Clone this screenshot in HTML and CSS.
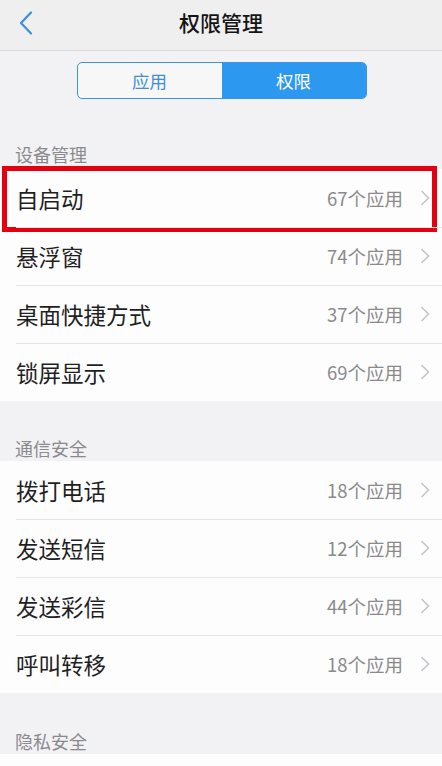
FILE: index.html
```html
<!DOCTYPE html>
<html lang="zh-CN">
<head>
<meta charset="utf-8">
<title>权限管理</title>
<link rel="stylesheet" href="styles.css">
</head>
<body>
<header class="navbar">
  <span class="back">
    <svg width="14" height="24" viewBox="0 0 14 24"><path d="M12 1.5 L2 12 L12 22.5" fill="none" stroke="#3b8fe0" stroke-width="2.2" stroke-linecap="round" stroke-linejoin="round"/></svg>
  </span>
  <h1 class="title">权限管理</h1>
</header>
<div class="tabs-wrap">
  <div class="tabs">
    <div class="tab">应用</div>
    <div class="tab active">权限</div>
  </div>
</div>
<div class="section-label first">设备管理</div>
<ul class="group">
  <li class="row highlighted"><span class="name">自启动</span><span class="count">67个应用</span><svg class="chev" width="10" height="16" viewBox="0 0 10 16"><path d="M1.5 1 L8.5 8 L1.5 15" fill="none" stroke="#c5c5ca" stroke-width="1.6"/></svg><span class="mark"></span></li>
  <li class="row"><span class="name">悬浮窗</span><span class="count">74个应用</span><svg class="chev" width="10" height="16" viewBox="0 0 10 16"><path d="M1.5 1 L8.5 8 L1.5 15" fill="none" stroke="#c5c5ca" stroke-width="1.6"/></svg></li>
  <li class="row"><span class="name">桌面快捷方式</span><span class="count">37个应用</span><svg class="chev" width="10" height="16" viewBox="0 0 10 16"><path d="M1.5 1 L8.5 8 L1.5 15" fill="none" stroke="#c5c5ca" stroke-width="1.6"/></svg></li>
  <li class="row"><span class="name">锁屏显示</span><span class="count">69个应用</span><svg class="chev" width="10" height="16" viewBox="0 0 10 16"><path d="M1.5 1 L8.5 8 L1.5 15" fill="none" stroke="#c5c5ca" stroke-width="1.6"/></svg></li>
</ul>
<div class="section-label">通信安全</div>
<ul class="group">
  <li class="row"><span class="name">拨打电话</span><span class="count">18个应用</span><svg class="chev" width="10" height="16" viewBox="0 0 10 16"><path d="M1.5 1 L8.5 8 L1.5 15" fill="none" stroke="#c5c5ca" stroke-width="1.6"/></svg></li>
  <li class="row"><span class="name">发送短信</span><span class="count">12个应用</span><svg class="chev" width="10" height="16" viewBox="0 0 10 16"><path d="M1.5 1 L8.5 8 L1.5 15" fill="none" stroke="#c5c5ca" stroke-width="1.6"/></svg></li>
  <li class="row"><span class="name">发送彩信</span><span class="count">44个应用</span><svg class="chev" width="10" height="16" viewBox="0 0 10 16"><path d="M1.5 1 L8.5 8 L1.5 15" fill="none" stroke="#c5c5ca" stroke-width="1.6"/></svg></li>
  <li class="row"><span class="name">呼叫转移</span><span class="count">18个应用</span><svg class="chev" width="10" height="16" viewBox="0 0 10 16"><path d="M1.5 1 L8.5 8 L1.5 15" fill="none" stroke="#c5c5ca" stroke-width="1.6"/></svg></li>
</ul>
<div class="section-label last">隐私安全</div>
<div class="tail"></div>
</body>
</html>
```
FILE: styles.css
```css
* { box-sizing: border-box; }
html, body {
  margin: 0;
  padding: 0;
  background: #f2f2f4;
  font-family: "Noto Sans CJK SC", "Noto Sans", sans-serif;
}
.navbar {
  height: 51px;
  background: #efefef;
  border-bottom: 1px solid #d8d8da;
  display: flex;
  align-items: center;
  justify-content: center;
  position: relative;
}
.back {
  position: absolute;
  left: 19px;
  top: 11px;
  display: flex;
}
.title {
  margin: 0;
  font-size: 21px;
  font-weight: 500;
  color: #141414;
  line-height: 24px;
  margin-top: -6px;
}
.tabs-wrap {
  display: flex;
  justify-content: center;
  padding-top: 11px;
  padding-left: 1px;
}
.tabs {
  width: 290px;
  height: 37px;
  display: flex;
  border: 1.5px solid #3a93e6;
  border-radius: 5px;
  overflow: hidden;
  background: #f7f7f8;
}
.tab {
  flex: 1;
  display: flex;
  align-items: center;
  justify-content: center;
  font-size: 17.5px;
  color: #3e8fd6;
}
.tab.active {
  background: #2c98f0;
  color: #ffffff;
}
.section-label {
  height: 60px;
  display: flex;
  align-items: flex-end;
  padding: 0 16px 1px 15px;
  font-size: 18px;
  line-height: 24px;
  color: #8a8a8e;
}
.section-label.first {
  height: 70px;
  padding-bottom: 3px;
}
.section-label.last {
  height: 61px;
}
.group {
  list-style: none;
  margin: 0;
  padding: 0;
  background: #fdfdfe;
}
.row {
  position: relative;
  height: 58px;
  display: flex;
  align-items: center;
  padding: 0 12px 0 16px;
}
.row + .row::before {
  content: "";
  position: absolute;
  left: 16px;
  right: 0;
  top: 0;
  height: 1px;
  background: #e4e4e6;
}
.name {
  flex: 1;
  font-size: 22.5px;
  color: #1f1f1f;
}
.count {
  font-size: 18.5px;
  color: #8a8a8a;
  margin-right: 17px;
}
.chev {
  display: block;
}
.mark {
  position: absolute;
  left: 2px;
  right: 5px;
  top: -3px;
  bottom: -5px;
  border: 5px solid #e5000f;
  pointer-events: none;
}
.tail {
  height: 20px;
  background: #fdfdfe;
}
```
